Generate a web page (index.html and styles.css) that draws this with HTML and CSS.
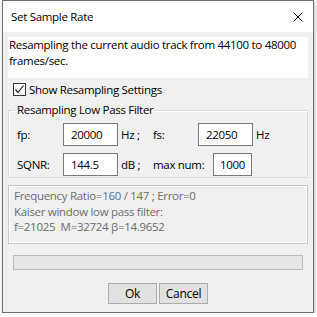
FILE: index.html
```html
<!DOCTYPE html>
<html lang="en">
<head>
  <meta charset="UTF-8" />
  <title>Set Sample Rate</title>
  <link rel="stylesheet" href="styles.css">
</head>
<body>

  <div class="window">
    <div class="titlebar">
      <span class="title">Set Sample Rate</span>
      <svg class="close" width="10" height="10" viewBox="0 0 10 10">
        <path d="M0.5 0.5 L9.5 9.5 M9.5 0.5 L0.5 9.5" stroke="#000" stroke-width="1" fill="none"/>
      </svg>
    </div>

    <div class="content">
      <div class="message">Resampling the current audio track from 44100 to 48000 frames/sec.</div>

      <label class="check-row">
        <span class="checkbox">
          <svg width="11" height="11" viewBox="0 0 11 11">
            <path d="M1.5 5.5 L4 8.5 L9.5 1.5" stroke="#222" stroke-width="1.2" fill="none"/>
          </svg>
        </span>
        Show Resampling Settings
      </label>

      <fieldset class="group">
        <legend>Resampling Low Pass Filter</legend>
        <div class="row">
          <span class="lbl">fp:</span>
          <span class="field">20000</span>
          <span class="unit">Hz ;</span>
          <span class="lbl2">fs:</span>
          <span class="field">22050</span>
          <span class="unit">Hz</span>
        </div>
        <div class="row">
          <span class="lbl">SQNR:</span>
          <span class="field">144.5</span>
          <span class="unit">dB ;</span>
          <span class="lbl3">max num:</span>
          <span class="field small">1000</span>
        </div>
      </fieldset>

      <div class="info">
        Frequency Ratio=160 / 147 ; Error=0<br>
        Kaiser window low pass filter:<br>
        f=21025&nbsp; M=32724 &beta;=14.9652
      </div>

      <div class="progress"></div>

      <div class="buttons">
        <button>Ok</button>
        <button>Cancel</button>
      </div>
    </div>
  </div>

</body>
</html>
```

FILE: styles.css
```css
body {
  margin: 0;
  font-family: "Open Sans", "Noto Sans", sans-serif;
  font-size: 11.5px;
  letter-spacing: -0.3px;
  color: #000;
  background: #fff;
}

.window {
  margin-left: 2px;
  width: 310px;
  height: 311px;
  border: 1px solid #707070;
  background: #f0f0f0;
  box-shadow: 1px 2px 4px rgba(0, 0, 0, 0.25);
  display: flex;
  flex-direction: column;
}

.titlebar {
  height: 31px;
  background: #fff;
  display: flex;
  align-items: center;
  justify-content: space-between;
  padding: 0 10px 0 8px;
}

.close {
  margin-top: 1px;
}

.content {
  flex: 1;
  padding: 5px 5px 0 5px;
  display: flex;
  flex-direction: column;
}

.message {
  background: #fff;
  height: 41px;
  line-height: 16px;
  padding: 0 1px;
  box-sizing: border-box;
}

.check-row {
  display: flex;
  align-items: center;
  height: 13px;
  margin: 5px 0 0 5px;
  gap: 3px;
}

.checkbox {
  width: 11px;
  height: 11px;
  border: 1px solid #333;
  background: #fff;
  display: flex;
}

.group {
  margin: 7px 0 0 0;
  padding: 6px 8px 8px 8px;
  border: 1px solid #dcdcdc;
  box-shadow: inset 1px 1px 0 #fff;
  height: 75px;
  box-sizing: border-box;
}

.group legend {
  padding: 0 1px;
  margin-left: -1px;
  line-height: 14px;
}

.row {
  display: flex;
  align-items: center;
  height: 23px;
}

.row + .row {
  margin-top: 7px;
}

.lbl {
  width: 46px;
}

.field {
  height: 21px;
  border: 1px solid #7a7a7a;
  background: #fff;
  padding-left: 7px;
  line-height: 21px;
  width: 46px;
}

.field.small {
  width: 31px;
  padding-left: 6px;
}

.unit {
  margin-left: 3px;
  width: 32px;
}

.lbl2 {
  width: 45px;
}

.lbl3 {
  width: 60px;
}

.info {
  margin-top: 7px;
  height: 59px;
  border: 1px solid #c8c8c8;
  box-shadow: inset 1px 1px 0 #fff, inset -1px -1px 0 #fff;
  color: #6d6d6d;
  line-height: 15.5px;
  padding: 2px 5px;
  box-sizing: border-box;
}

.progress {
  margin: 11px 5px 0 5px;
  height: 15px;
  border: 1px solid #bcbcbc;
  background: #e6e6e6;
  box-sizing: border-box;
}

.buttons {
  display: flex;
  justify-content: center;
  gap: 2px;
  margin-top: 13px;
}

.buttons button {
  width: 49px;
  height: 21px;
  background: #e1e1e1;
  border: 1px solid #adadad;
  font-family: inherit;
  font-size: 12px;
  letter-spacing: -0.3px;
  padding: 0;
  color: #000;
}
```
